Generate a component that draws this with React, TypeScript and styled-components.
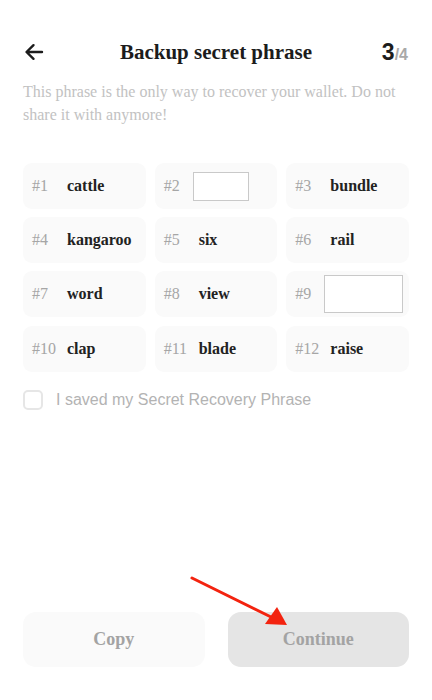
import { createGlobalStyle, styled } from "styled-components";

const GlobalStyle = createGlobalStyle`
  html, body {
    margin: 0;
    padding: 0;
    background: #ffffff;
  }
  * {
    box-sizing: border-box;
  }
`;

const Screen = styled.div`
  position: relative;
  width: 432px;
  height: 700px;
  display: flex;
  flex-direction: column;
  padding: 36px 23px 33px;
  background: #ffffff;
  font-family: "Liberation Serif", serif;
  overflow: hidden;
`;

const Header = styled.div`
  display: grid;
  grid-template-columns: 40px 1fr 40px;
  align-items: center;
  height: 32px;
`;

const Back = styled.button`
  display: flex;
  align-items: center;
  border: none;
  background: none;
  padding: 0;
  margin-left: 1px;
  cursor: pointer;
`;

const Title = styled.h1`
  margin: 0;
  text-align: center;
  font-size: 21px;
  font-weight: 700;
  color: #1c1c1c;
`;

const Step = styled.div`
  justify-self: end;
  margin-right: 1px;
  font-family: "Liberation Sans", sans-serif;
  font-weight: 700;
  font-size: 23px;
  color: #1c1c1c;
  white-space: nowrap;

  span {
    font-size: 16px;
    color: #a9a9a9;
  }
`;

const Intro = styled.p`
  margin: 12px 0 0;
  font-size: 16px;
  line-height: 23px;
  color: #c2c2c2;
`;

const WordGrid = styled.div`
  display: grid;
  grid-template-columns: repeat(3, 1fr);
  grid-auto-rows: 46px;
  gap: 8.2px 9px;
  margin-top: 37px;
`;

const Cell = styled.div`
  display: flex;
  align-items: center;
  padding-left: 9px;
  border-radius: 9px;
  background: #fafafa;
`;

const Index = styled.span`
  flex: none;
  width: 35px;
  font-size: 16px;
  color: #a6a6a6;
`;

const Word = styled.span`
  font-size: 16px;
  font-weight: 700;
  color: #222222;
`;

const Blank = styled.input<{ $w: number; $h: number }>`
  width: ${(p) => p.$w}px;
  height: ${(p) => p.$h}px;
  margin-left: -6px;
  border: 1px solid #c9c9c9;
  border-radius: 0;
  background: #ffffff;
  outline: none;
`;

const Check = styled.label`
  display: flex;
  align-items: center;
  gap: 13px;
  margin-top: 18px;
  font-family: "Liberation Sans", sans-serif;
  font-size: 16px;
  color: #b3b3b3;
`;

const Box = styled.span`
  width: 20px;
  height: 20px;
  border: 2px solid #e6e6e6;
  border-radius: 5px;
`;

const Actions = styled.div`
  margin-top: auto;
  display: grid;
  grid-template-columns: 1fr 1fr;
  gap: 23px;
`;

const Action = styled.button<{ $filled?: boolean }>`
  height: 55px;
  border: none;
  border-radius: 13px;
  background: ${(p) => (p.$filled ? "#e5e5e5" : "#fafafa")};
  font-family: "Liberation Serif", serif;
  font-size: 18px;
  font-weight: 700;
  color: #a3a3a3;
`;

const Pointer = styled.svg`
  position: absolute;
  left: 0;
  top: 0;
  pointer-events: none;
`;

type Entry = { n: number; word?: string; blank?: [number, number]; shift?: number };

const entries: Entry[] = [
  { n: 1, word: "cattle" },
  { n: 2, blank: [56, 29] },
  { n: 3, word: "bundle" },
  { n: 4, word: "kangaroo" },
  { n: 5, word: "six" },
  { n: 6, word: "rail" },
  { n: 7, word: "word" },
  { n: 8, word: "view" },
  { n: 9, blank: [79, 38] },
  { n: 10, word: "clap" },
  { n: 11, word: "blade" },
  { n: 12, word: "raise" },
];

export default function App() {
  return (
    <>
      <GlobalStyle />
      <Screen>
        <Header>
          <Back aria-label="Back">
            <svg width="20" height="18" viewBox="0 0 20 18" fill="none">
              <path
                d="M18 9H3M9.5 2.2 2.5 9l7 6.8"
                stroke="#1c1c1c"
                strokeWidth="2.4"
                strokeLinecap="round"
                strokeLinejoin="round"
              />
            </svg>
          </Back>
          <Title>Backup secret phrase</Title>
          <Step>
            3<span>/4</span>
          </Step>
        </Header>

        <Intro>
          This phrase is the only way to recover your wallet. Do not share it
          with anymore!
        </Intro>

        <WordGrid>
          {entries.map((e) => (
            <Cell key={e.n}>
              <Index>#{e.n}</Index>
              {e.blank ? (
                <Blank $w={e.blank[0]} $h={e.blank[1]} />
              ) : (
                <Word>{e.word}</Word>
              )}
            </Cell>
          ))}
        </WordGrid>

        <Check>
          <Box />
          I saved my Secret Recovery Phrase
        </Check>

        <Actions>
          <Action>Copy</Action>
          <Action $filled>Continue</Action>
        </Actions>

        <Pointer width="432" height="700" viewBox="0 0 432 700">
          <line
            x1="192"
            y1="578"
            x2="271"
            y2="617"
            stroke="#f3230f"
            strokeWidth="3"
            strokeLinecap="round"
          />
          <polygon points="287,625 265,624 277,607" fill="#f3230f" />
        </Pointer>
      </Screen>
    </>
  );
}
